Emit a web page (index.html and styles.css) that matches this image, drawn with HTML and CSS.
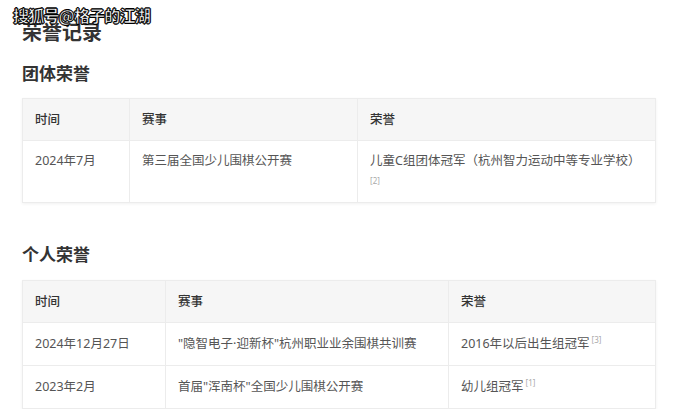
FILE: index.html
```html
<!DOCTYPE html>
<html lang="zh-CN">
<head>
  <meta charset="UTF-8">
  <title>荣誉记录</title>
  <link rel="stylesheet" href="styles.css">
</head>
<body>

  <div class="watermark">搜狐号@格子的江湖</div>

  <h1>荣誉记录</h1>

  <!-- 团体荣誉 -->
  <h2 class="first">团体荣誉</h2>
  <table class="honor team">
    <thead>
      <tr>
        <th class="c1">时间</th>
        <th class="c2">赛事</th>
        <th class="c3">荣誉</th>
      </tr>
    </thead>
    <tbody>
      <tr class="tall">
        <td>2024年7月</td>
        <td>第三届全国少儿围棋公开赛</td>
        <td>儿童C组团体冠军（杭州智力运动中等专业学校）<span class="ref block">[2]</span></td>
      </tr>
    </tbody>
  </table>

  <!-- 个人荣誉 -->
  <h2>个人荣誉</h2>
  <table class="honor solo">
    <thead>
      <tr>
        <th class="c1">时间</th>
        <th class="c2">赛事</th>
        <th class="c3">荣誉</th>
      </tr>
    </thead>
    <tbody>
      <tr>
        <td>2024年12月27日</td>
        <td>"隐智电子·迎新杯"杭州职业业余围棋共训赛</td>
        <td>2016年以后出生组冠军<span class="ref">[3]</span></td>
      </tr>
      <tr>
        <td>2023年2月</td>
        <td>首届"浑南杯"全国少儿围棋公开赛</td>
        <td>幼儿组冠军<span class="ref">[1]</span></td>
      </tr>
    </tbody>
  </table>

</body>
</html>
```

FILE: styles.css
```css
* {
  box-sizing: border-box;
}

body {
  margin: 0;
  padding: 19px 22px 0;
  background: #fff;
  font-family: "Noto Sans CJK SC", "Noto Sans", sans-serif;
  color: #333;
  position: relative;
}

.watermark {
  position: absolute;
  top: 5px;
  left: 13px;
  font-size: 16px;
  line-height: 20px;
  font-weight: bold;
  color: #fff;
  letter-spacing: -0.8px;
  -webkit-text-stroke: 0.6px #000;
  text-shadow: 1px 0 0 #000, -1px 0 0 #000, 0 1px 0 #000, 0 -1px 0 #000;
  z-index: 2;
}

h1 {
  margin: 0;
  font-size: 20px;
  line-height: 26px;
  font-weight: bold;
  color: #333;
}

h2 {
  margin: 39px 0 14px;
  font-size: 17px;
  line-height: 24px;
  font-weight: bold;
  color: #333;
}

h2.first {
  margin-top: 16px;
  margin-bottom: 13px;
}

.honor {
  width: 633px;
  border-collapse: collapse;
  table-layout: fixed;
  font-family: "Noto Sans", "Noto Sans CJK SC", sans-serif;
  font-size: 12.5px;
  box-shadow: 0 1px 3px rgba(0, 0, 0, 0.06);
}

.honor th,
.honor td {
  border: 1px solid #ececec;
  padding: 0 12px;
  text-align: left;
  vertical-align: middle;
  line-height: 20px;
}

.honor th {
  height: 42px;
  background: #f6f6f6;
  font-weight: 500;
  color: #333;
}

.honor td {
  height: 43px;
  color: #555;
}

.honor tr.tall td {
  height: 62px;
  vertical-align: top;
  padding-top: 10px;
}

.team .c1 { width: 107px; }
.team .c2 { width: 228px; }
.team .c3 { width: 298px; }

.solo .c1 { width: 143px; }
.solo .c2 { width: 283px; }
.solo .c3 { width: 207px; }

.ref {
  font-size: 8px;
  color: #aaa;
  vertical-align: top;
  margin-left: 2px;
  line-height: 12px;
}

.ref.block {
  display: block;
  margin: 0;
  line-height: 20px;
}
```
